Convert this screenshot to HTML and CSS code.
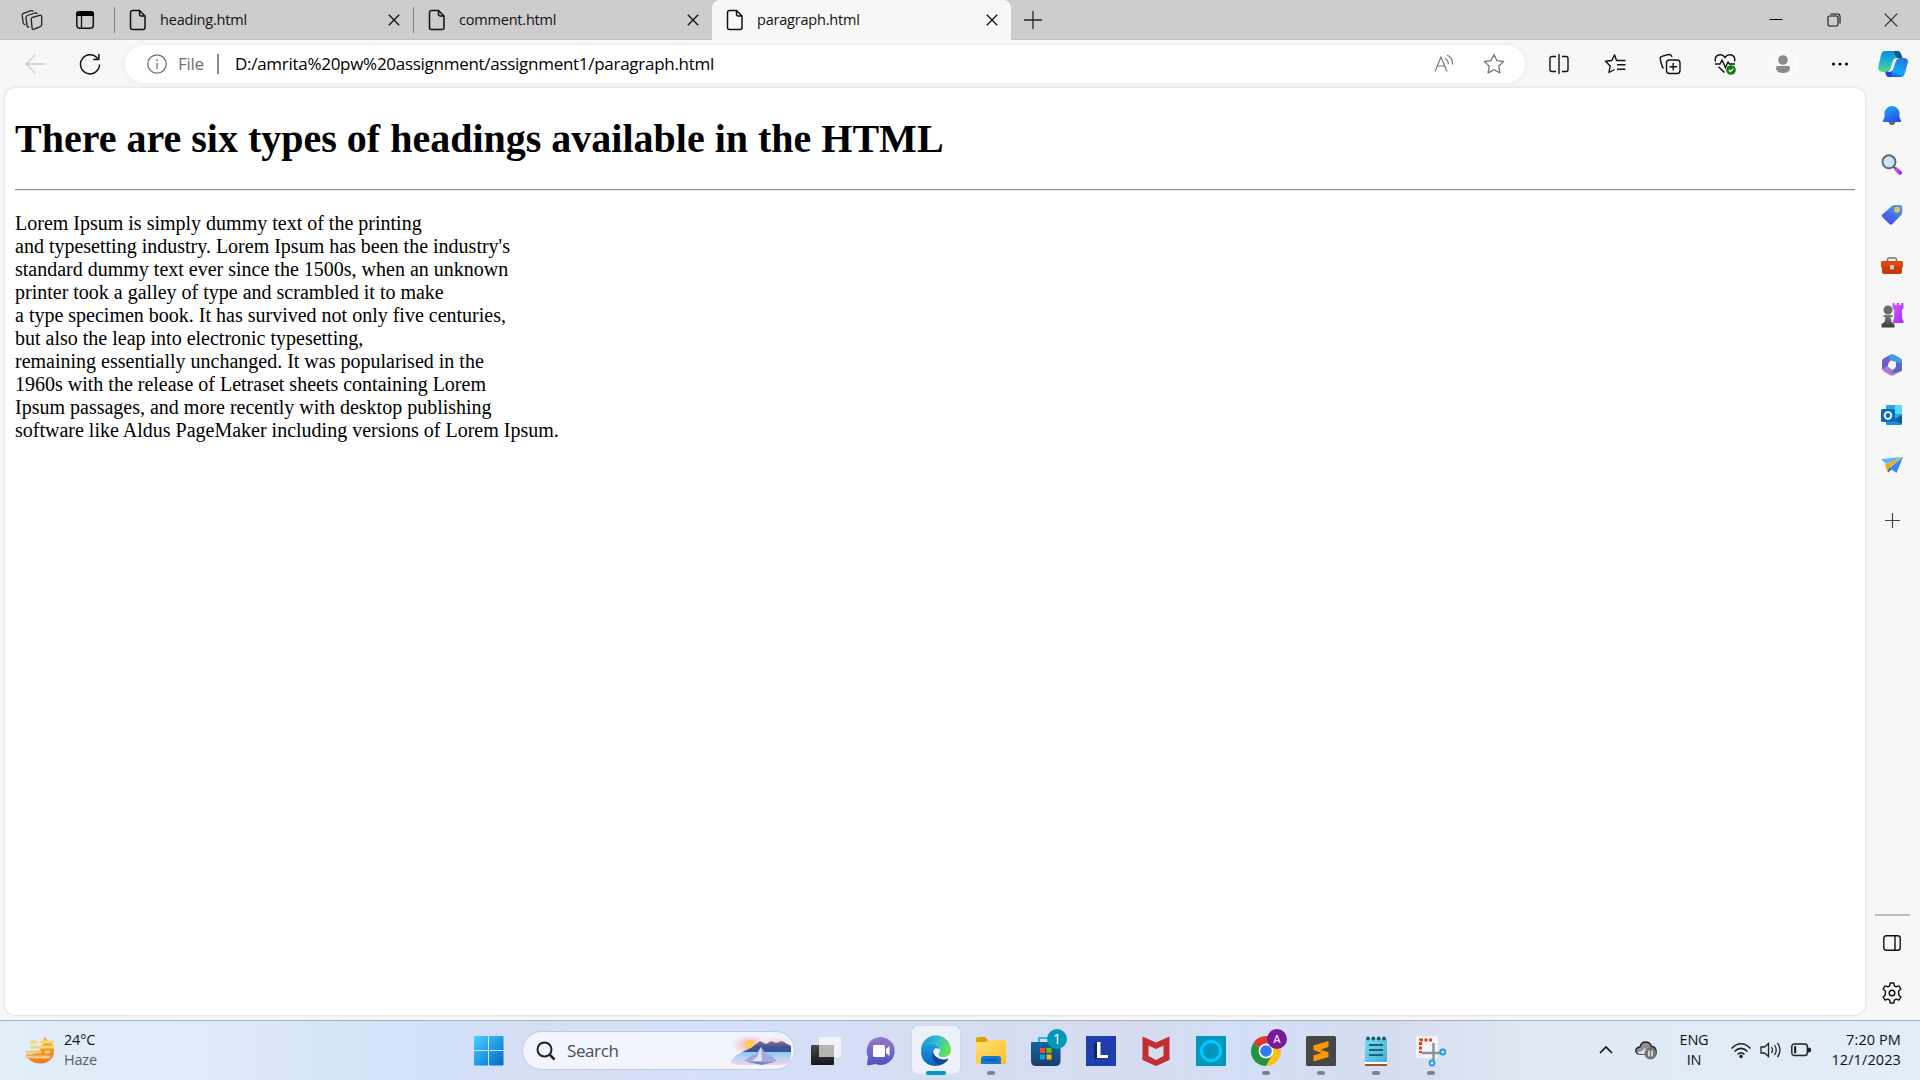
FILE: index.html
```html
<!DOCTYPE html>
<html lang="en">
<head>
<meta charset="utf-8">
<title>paragraph.html</title>
<link rel="stylesheet" href="styles.css">
</head>
<body>
<svg class="defs" width="0" height="0" aria-hidden="true">
  <defs>
    <symbol id="file" viewBox="0 0 18 22"><path d="M3.5 1.5h7l5.5 5.5v11.500a2 2 0 0 1-2 2H3.500a2 2 0 0 1-2-2v-15a2 2 0 0 1 2-2zM10.500 1.500v4a1.500 1.500 0 0 0 1.500 1.500h4" fill="none" stroke="#111" stroke-width="1.500"/></symbol>
    <symbol id="x" viewBox="0 0 12 12"><path d="M.8.8l10.400 10.400M11.200.8L.8 11.200" stroke="#111" stroke-width="1.300"/></symbol>
    <linearGradient id="gBlue" x1="0" y1="0" x2="1" y2="1"><stop offset="0" stop-color="#48cfff"/><stop offset="1" stop-color="#0069cc"/></linearGradient>
    <linearGradient id="gBell" x1="0" y1="0" x2=".6" y2="1"><stop offset="0" stop-color="#1db0ec"/><stop offset="1" stop-color="#2456e8"/></linearGradient>
    <linearGradient id="gTag" x1=".8" y1="0" x2=".3" y2="1"><stop offset="0" stop-color="#4d9bf5"/><stop offset="1" stop-color="#3f4ae8"/></linearGradient>
    <linearGradient id="gPurple" x1="0" y1="0" x2="0" y2="1"><stop offset="0" stop-color="#9b78c8"/><stop offset="1" stop-color="#4c54c4"/></linearGradient>
    <linearGradient id="gCop1" x1=".3" y1="0" x2=".3" y2="1"><stop offset="0" stop-color="#128bd8"/><stop offset=".5" stop-color="#18b4d0"/><stop offset="1" stop-color="#5bdc85"/></linearGradient>
    <linearGradient id="gCop2" x1=".7" y1="0" x2=".3" y2="1"><stop offset="0" stop-color="#2677dd"/><stop offset=".7" stop-color="#15a9f8"/><stop offset="1" stop-color="#1e4be0"/></linearGradient>
    <linearGradient id="gMagenta" x1="0" y1="0" x2="1" y2="1"><stop offset="0" stop-color="#d05cff"/><stop offset="1" stop-color="#a22cf0"/></linearGradient>
    <linearGradient id="gFolder" x1="0" y1="0" x2="1" y2="1"><stop offset="0" stop-color="#ffe07a"/><stop offset="1" stop-color="#ffbe1f"/></linearGradient>
    <linearGradient id="gEdge1" x1="0" y1=".2" x2="1" y2=".5"><stop offset="0" stop-color="#1593d6"/><stop offset=".5" stop-color="#2cc0cf"/><stop offset="1" stop-color="#6ae649"/></linearGradient>
    <linearGradient id="gEdge2" x1="0" y1="0" x2="0" y2="1"><stop offset="0" stop-color="#1ba3e3"/><stop offset="1" stop-color="#0a60c0"/></linearGradient>
    <linearGradient id="gStore" x1="0" y1="0" x2="0" y2="1"><stop offset="0" stop-color="#0c67a6"/><stop offset="1" stop-color="#1d3c69"/></linearGradient>
    <linearGradient id="gPad" x1="0" y1="0" x2="1" y2="1"><stop offset="0" stop-color="#7bdcf3"/><stop offset="1" stop-color="#46acd2"/></linearGradient>
    <linearGradient id="gSun" x1="0" y1="0" x2="0" y2="1"><stop offset="0" stop-color="#f4b52c"/><stop offset="1" stop-color="#ef7620"/></linearGradient>
    <linearGradient id="gDark" x1="0" y1="0" x2="0" y2="1"><stop offset="0" stop-color="#4a4a4a"/><stop offset="1" stop-color="#171717"/></linearGradient>
    <linearGradient id="gChess" x1="0" y1="0" x2="0" y2="1"><stop offset="0" stop-color="#7c7c7c"/><stop offset="1" stop-color="#3a3a3a"/></linearGradient>
    <linearGradient id="gLake" x1="0" y1="0" x2="0" y2="1"><stop offset="0" stop-color="#8fc6ef"/><stop offset=".5" stop-color="#bdd5f5"/><stop offset="1" stop-color="#f3d3ec"/></linearGradient>
    <linearGradient id="gHill" x1="0" y1="0" x2="0" y2="1"><stop offset="0" stop-color="#8d7295"/><stop offset=".6" stop-color="#3b5290"/><stop offset="1" stop-color="#31599f"/></linearGradient>
    <radialGradient id="gGlow"><stop offset="0" stop-color="#ff9f9a"/><stop offset="1" stop-color="#ffb9c8" stop-opacity="0"/></radialGradient>
  </defs>
</svg>

<div class="screen">
  <header class="tabstrip">
    <div class="strip-tools">
      <svg width="22" height="22" viewBox="0 0 22 22" fill="none" stroke="#222" stroke-width="1.300"><path d="M11.500 8.300l7.200-2q2-.4 2 1.300v8q0 1.500-1.300 2l-6.300 2.600q-2 .6-2-1.300l-.9-8.500q0-1.600 1.300-2.100zM8.300 18q-2 .3-2.300-1.300L5 8.500Q5 7 6.400 6.500L14 4q1.800-.5 2.300 1M4.300 15.500q-1.800.2-2.100-1.500L1.200 6.500Q1 5 2.500 4.400L10 1.700q1.600-.5 2.300.8"/></svg>
      <svg width="20" height="20" viewBox="0 0 20 20"><rect x="1.800" y="1.800" width="16.500" height="16.500" rx="3" fill="none" stroke="#111" stroke-width="1.500"/><path d="M1 6V4a3 3 0 0 1 3-3h12a3 3 0 0 1 3 3v2z"/><path d="M6.500 6v12" stroke="#111" stroke-width="1.300"/></svg>
    </div>
    <div class="tab"><svg class="doc"><use href="#file"/></svg><span class="tab-name">heading.html</span><svg class="close"><use href="#x"/></svg></div>
    <div class="tab"><svg class="doc"><use href="#file"/></svg><span class="tab-name">comment.html</span><svg class="close"><use href="#x"/></svg></div>
    <div class="tab active"><svg class="doc"><use href="#file"/></svg><span class="tab-name">paragraph.html</span><svg class="close"><use href="#x"/></svg></div>
    <div class="newtab"><svg width="18" height="18" viewBox="0 0 18 18"><path d="M9 0v18M0 9h18" stroke="#222" stroke-width="1.300"/></svg></div>
    <div class="window-controls">
      <svg width="14" height="14" viewBox="0 0 14 14"><path d="M.5 6.500h13" stroke="#000"/></svg>
      <svg width="14" height="14" viewBox="0 0 14 14" fill="none" stroke="#111" stroke-width="1.100"><rect x="1" y="3" width="10" height="10" rx="1.500"/><path d="M3.500 1h7q2.500 0 2.500 2.500v7"/></svg>
      <svg width="14" height="14" viewBox="0 0 14 14"><path d="M.7.700l12.600 12.600M13.300.700L.7 13.300" stroke="#222" stroke-width="1.100"/></svg>
    </div>
  </header>

  <nav class="toolbar">
    <svg class="back" width="20" height="20" viewBox="0 0 20 20" fill="none" stroke="#ccc" stroke-width="1.300"><path d="M10 1L1 10l9 9M1 10h19"/></svg>
    <svg class="reload" width="22" height="22" viewBox="0 0 22 22" fill="none" stroke="#111" stroke-width="1.500"><path d="M20.500 11.500A9.500 9.500 0 1 1 18.500 5.500M19.800 1v5.500h-5.600"/></svg>
    <div class="address">
      <svg width="20" height="20" viewBox="0 0 20 20" fill="none" stroke="#707070" stroke-width="1.300"><circle cx="10" cy="10" r="9.200"/><path d="M10 9v6"/><circle cx="10" cy="6" r=".6" fill="#707070" stroke-width=".8"/></svg>
      <span class="scheme">File</span>
      <i class="bar"></i>
      <span class="url">D:/amrita%20pw%20assignment/assignment1/paragraph.html</span>
      <svg class="read" width="20" height="20" viewBox="0 0 20 20" fill="none" stroke="#777" stroke-width="1.200"><path d="M1 17.500L7 3l6 14.500M3.300 12h7.400M11 4.200q3.500 1.800 3.300 6M13 1q6 2.800 5.500 9.500"/></svg>
      <svg width="22" height="22" viewBox="0 0 22 22" fill="none" stroke="#777" stroke-width="1.300" stroke-linejoin="round"><path d="M11 1.500l2.900 6.100 6.600.9-4.800 4.700 1.200 6.700L11 16.700l-5.900 3.200 1.200-6.700L1.500 8.500l6.600-.9z"/></svg>
    </div>
    <div class="actions">
      <div><svg width="20" height="20" viewBox="0 0 20 20" fill="none" stroke="#111" stroke-width="1.400"><path d="M10 0v20M7 2.500H3a2 2 0 0 0-2 2v11a2 2 0 0 0 2 2h4M13 2.500h4a2 2 0 0 1 2 2v11a2 2 0 0 1-2 2h-4"/></svg></div>
      <div><svg width="22" height="22" viewBox="0 0 22 22" fill="none" stroke="#111" stroke-width="1.400" stroke-linejoin="round"><path d="M14 7.500h-1.500L10.500 1.800 7.800 7.500 1.500 8.300l4.600 4.700-1.100 6.500 5.500-3M14 7.500h7.500M13 11.800h8.500M13 16.200h8.500"/></svg></div>
      <div><svg width="22" height="22" viewBox="0 0 22 22" fill="none" stroke="#111" stroke-width="1.400"><rect x="7.500" y="7" width="13.500" height="13.500" rx="3"/><path d="M14.200 10v7.500M10.500 13.800H18M4.800 15.200l-.6-.3Q3.300 14.500 3 13L1.200 6.200Q.8 4 2.800 3.300L9.500 1.500Q12 1 13 3.800"/></svg></div>
      <div><svg width="22" height="22" viewBox="0 0 22 22" fill="none" stroke="#111" stroke-width="1.400"><path d="M1.400 8.500C0 1 8 0 11 4.500 14 0 22 1 20.600 8.500M1 11h5l2-4 3.500 7.500L14 9l1.500 2H21M4.500 13.800l6 5.700"/><circle cx="17" cy="17" r="4.800" fill="#107c10" stroke="none"/><path d="M14.800 17l1.600 1.600 3-3" stroke="#fff" stroke-width="1.200"/></svg></div>
      <div><svg width="28" height="28" viewBox="0 0 28 28"><circle cx="14" cy="14" r="13.500" fill="#f8f8f8" stroke="#fff"/><circle cx="14" cy="10" r="4.800" fill="#8b8b8b"/><path d="M7 17.500q0-1.500 1.500-1.500h11q1.500 0 1.500 1.500 0 5.500-7 5.500t-7-5.500z" fill="#8b8b8b"/></svg></div>
      <div><svg width="18" height="6" viewBox="0 0 18 6"><circle cx="2.500" cy="3" r="1.600"/><circle cx="9" cy="3" r="1.600"/><circle cx="15.500" cy="3" r="1.600"/></svg></div>
      <div><svg width="30" height="28" viewBox="0 0 30 28"><path d="M7 1h12q3 0 4 3l1 4h-5q-3 0-4 3l-2.500 8q-1 3-4 3H4Q0 21 .2 17.500L3 5q1-4 4-4z" fill="url(#gCop1)"/><path d="M16 1h3q3 0 4 3l1.500 4H20q-2 0-3-3z" fill="#10557f"/><path d="M23 8h3q4 0 4 4l-3 11q-1 4-4.500 4H11q-3 0-4-5h2.500q2.500 0 3.500-3l2.500-7.500q1-3.500 4-3.500z" fill="url(#gCop2)"/><path d="M8 21.500h2.500q3 0 4-3l-2 8.500H11q-2.500 0-3-5.500z" fill="#2044cf"/><path d="M18.800 8q-3 .3-3.800 3l-2.500 8q-.7 2.500-3 3 4.500.3 5.700-3l2.500-7.500q.8-2.800 3.300-3.500z" fill="#f7f7f7"/></svg></div>
    </div>
  </nav>

  <div class="middle">
    <main class="page">
      <h1>There are six types of headings available in the HTML</h1>
      <hr>
      <p>Lorem Ipsum is simply dummy text of the printing<br>and typesetting industry. Lorem Ipsum has been the industry's<br>standard dummy text ever since the 1500s, when an unknown<br>printer took a galley of type and scrambled it to make<br>a type specimen book. It has survived not only five centuries,<br>but also the leap into electronic typesetting,<br>remaining essentially unchanged. It was popularised in the<br>1960s with the release of Letraset sheets containing Lorem<br>Ipsum passages, and more recently with desktop publishing<br>software like Aldus PageMaker including versions of Lorem Ipsum.</p>
    </main>
    <aside class="sidebar">
      <div><svg width="22" height="22" viewBox="0 0 22 22"><path d="M7.500 17.500h7q-.5 3.500-3.500 3.500t-3.500-3.500z" fill="#666"/><path d="M3.500 9.500a7.500 7.500 0 0 1 15 0v4l1.700 3.300q.3 1.200-1 1.200H2.800q-1.300 0-1-1.200l1.700-3.300z" fill="url(#gBell)"/></svg></div>
      <div><svg width="22" height="22" viewBox="0 0 22 22"><path d="M15 15l4 3.800" stroke="url(#gMagenta)" stroke-width="4" stroke-linecap="round"/><path d="M12 12l3 3" stroke="#666" stroke-width="2"/><circle cx="8" cy="7.800" r="6.500" fill="#c8e6fa" stroke="#696969" stroke-width="2"/></svg></div>
      <div><svg width="22" height="22" viewBox="0 0 22 22"><path d="M11.500 1.500q.8-.6 2-.6H19q2.200 0 2.200 2.200v5.500q0 1.300-.8 2.200l-9 9.300q-1.500 1.300-3 0L1.300 13q-1.200-1.500.2-2.800z" fill="url(#gTag)"/><circle cx="16" cy="5.800" r="2.200" fill="#a9cbc0" stroke="#f5c915" stroke-width="1.500"/></svg></div>
      <div><svg width="24" height="20" viewBox="0 0 24 20"><path d="M7.500 7V4.500Q7.500 3 9 3h6q1.500 0 1.500 1.500V7" fill="none" stroke="#777" stroke-width="1.500"/><rect x="1" y="6" width="22" height="6.500" rx="1.200" fill="#dc4a13"/><path d="M2 11.500h20V17q0 2-2 2H4q-2 0-2-2z" fill="#c83a0c"/><rect x="10" y="10" width="4" height="4.500" rx="1" fill="#c7c7c7"/></svg></div>
      <div><svg width="24" height="26" viewBox="0 0 24 26"><path d="M12.500 1h2.200v2h2V1h2.600v2h2V1h2.200v5l-1.500 2v8l1.500 3v2H13v-2l1.200-3V8l-1.700-2z" fill="url(#gMagenta)"/><circle cx="8" cy="8" r="4.500" fill="#6c6c6c"/><path d="M3.500 13h9v2h-2l1 5 3 2v3.500h-13V22l3-2 1-5h-2z" fill="url(#gChess)"/></svg></div>
      <div><svg width="22" height="24" viewBox="0 0 22 24"><path d="M8 2.500Q11 .500 14 2.300l5.500 3.200Q21 6.500 21 8v2l-6.500-2.500Q11 5.500 9 8L7 13l-5.500 4Q1 16.500 1 15V8q0-1.500 1.500-2.500z" fill="#6b5fd0"/><path d="M8 2.500Q11 .500 14 2.300l5.500 3.200Q21 6.500 21 8v8l-6-2.500V9L8.500 7z" fill="#439bda"/><path d="M1.500 17L7 13l4 3.500q3 0 4-3l6-3.500v6q0 1.500-1.500 2.500L13 22q-2 1-4 0l-6-3.500z" fill="#aa78cf"/><path d="M15 13.500V9l6 1v6q0 1.500-1.500 2.500L11 20z" fill="#5269c8"/><circle cx="11" cy="12" r="3.800" fill="#f7f7f7"/></svg></div>
      <div><svg width="22" height="22" viewBox="0 0 22 22"><rect x="5" y="1" width="16" height="18" rx="1" fill="#29a5e8"/><path d="M14 1h6q1 0 1 1v8h-7z" fill="#58d9fb"/><path d="M5 11l8 5 8-5v9q0 1-1 1H6q-1 0-1-1z" fill="#1490dd"/><path d="M12 16l9-5v9z" fill="#0b5f9d"/><rect y="5" width="14" height="13" rx="1.500" fill="#0f6cbd"/><circle cx="7" cy="11.500" r="3.300" fill="none" stroke="#fff" stroke-width="1.800"/></svg></div>
      <div><svg width="24" height="18" viewBox="0 0 24 18"><path d="M7 10l1 6.500 3.500-3.500" fill="#174a99"/><path d="M23 1L5 8.500l2.500 8L10 11z" fill="#f6a719"/><path d="M1 3L23 1 6 8z" fill="#55bdf3"/><path d="M23 1l-6.500 16-7-5z" fill="#348af2"/></svg></div>
      <div class="add"><svg width="15" height="15" viewBox="0 0 15 15"><path d="M7.500 0v15M0 7.500h15" stroke="#444" stroke-width="1.200"/></svg></div>
      <hr>
      <div><svg width="18" height="16" viewBox="0 0 18 16" fill="none" stroke="#111" stroke-width="1.400"><rect x=".8" y=".8" width="16.400" height="14.400" rx="2.500"/><path d="M12 1v14"/></svg></div>
      <div><svg width="22" height="22" viewBox="0 0 22 22" fill="none" stroke="#111" stroke-width="1.400" stroke-linejoin="round"><path d="M9.200 1h3.600l.6 2.900 1.700 1 2.800-1 2 3.200-2.200 2v3.800l2.200 2-2 3.200-2.800-1-1.700 1-.6 2.900H9.200l-.6-2.900-1.700-1-2.800 1-2-3.200 2.200-2V9.100l-2.200-2 2-3.200 2.800 1 1.700-1z"/><circle cx="11" cy="11" r="2.800"/></svg></div>
    </aside>
  </div>

  <footer class="taskbar">
    <div class="weather">
      <svg width="30" height="28" viewBox="0 0 30 28"><path d="M19 0q1 3 4.500 4.500 5.500 3 5.500 9.500 0 13-14 13.500Q4 27 1 18q8 2 13-3 5-6 5-15z" fill="url(#gSun)"/><path d="M6.500 6h4.500M16 6h12M6.500 11h22" stroke="#f8d775" stroke-width="3" stroke-linecap="round"/><path d="M2 16h13M21 16h3M2 21h22" stroke="#eecb82" stroke-width="3" stroke-linecap="round"/></svg>
      <div class="weather-text"><span>24°C</span><span class="muted">Haze</span></div>
    </div>
    <div class="dock">
      <div class="start"><svg width="30" height="30" viewBox="0 0 30 30"><path d="M1 0h13v14H0V1q0-1 1-1zM15 0h13.500Q29.500 0 29.500 1v13H15zM0 15h14v14.500H1q-1 0-1-1zM15 15h14.500v13.500q0 1-1 1H15z" fill="url(#gBlue)"/></svg></div>
      <div class="search">
        <svg width="20" height="20" viewBox="0 0 20 20" fill="none" stroke="#222" stroke-width="2"><circle cx="8.500" cy="8.500" r="7"/><path d="M13.500 13.500l5 5" stroke-width="2.500"/></svg>
        <span>Search</span>
        <svg class="scene" width="62" height="32" viewBox="0 0 62 32"><ellipse cx="20" cy="10" rx="19" ry="11" fill="url(#gGlow)"/><ellipse cx="46" cy="8" rx="15" ry="8" fill="url(#gGlow)" opacity=".5"/><path d="M12 17h49v6q-1 7-9 7H8q-8-1-7-5 5-5 11-8z" fill="url(#gLake)"/><circle cx="20" cy="10" r="5" fill="#ffcc4d"/><path d="M12 17l9-4 9-7 6 3 5-3 5 2 6-2 9 5v6z" fill="url(#gHill)"/><path d="M14 26l8-6 4-1 5-7 5 7 5 1 6 6q-16 5-33 0z" fill="#a9a6de"/><path d="M31 12l-4 10-5 4h10z" fill="#e3e3fa"/><path d="M18 27h26l-12 3z" fill="#7482c7"/></svg>
      </div>
      <div class="app first"><svg width="30" height="28" viewBox="0 0 30 28"><rect y="8" width="23" height="20" rx="1" fill="url(#gDark)"/><rect x="8" width="22" height="20" rx="1" fill="#f4f4f4" opacity=".92"/><path d="M8 8h15v12H8z" fill="#b4b4b4"/></svg></div>
      <div class="app"><svg width="30" height="30" viewBox="0 0 30 30"><path d="M15 1a14 14 0 1 1-5.500 27Q5 29.500 1 29l1-8A14 14 0 0 1 15 1z" fill="url(#gPurple)"/><rect x="7" y="9" width="12" height="12" rx="1.500" fill="#fff"/><path d="M20 13l3.500-3v10L20 17z" fill="#fff"/></svg></div>
      <div class="app current"><svg width="30" height="30" viewBox="0 0 30 30"><path d="M0 15A15 15 0 0 1 30 14q0 7-8 7-5 0-4.500-3 2-1.500 1.500-4Q17 7 9 7 3 8 0 15z" fill="url(#gEdge1)"/><path d="M0 16Q1 7.500 9.500 7 16 7 19 13q-7-3-7 5 1 8 10 10-4 2-8 2Q1 29 0 16z" fill="url(#gEdge2)"/><path d="M12 16q-3 7 4 12 5 2 9-2 2.500-2 2-3.500-4 2-9 0-4.500-2-6-6.500z" fill="#114a94"/></svg><i class="mark on"></i></div>
      <div class="app"><svg width="30" height="27" viewBox="0 0 30 27"><path d="M0 2q0-2 2-2h7l3 3h18v12H0z" fill="#dda005"/><path d="M0 5h10l2-2h18v24H0z" fill="url(#gFolder)"/><path d="M5 27v-5q0-3 3-3h14q3 0 3 3v5z" fill="#1478d0"/><path d="M9 23h12" stroke="#084f97" stroke-width="1.500"/></svg><i class="mark"></i></div>
      <div class="app"><svg width="30" height="30" viewBox="0 0 30 30"><path d="M8 7V2h13" fill="none" stroke="#28b7f2" stroke-width="2"/><path d="M0 6h29.500v19q0 5-5 5H5q-5 0-5-5z" fill="url(#gStore)"/><path d="M9 12h5v5H9z" fill="#f25022"/><path d="M15.500 12h5v5h-5z" fill="#7fba00"/><path d="M9 18.500h5v5H9z" fill="#00a4ef"/><path d="M15.500 18.500h5v5h-5z" fill="#ffb900"/></svg><b class="badge">1</b></div>
      <div class="app"><svg width="30" height="30" viewBox="0 0 30 30"><path d="M0 0h30v30H0z" fill="#1e3ead"/><path d="M11 6l-3 2v15l14-1v-3H11z" fill="#06295b"/><path d="M11 6h3.500v13H22v3H11z" fill="#fff"/></svg></div>
      <div class="app"><svg width="28" height="30" viewBox="0 0 28 30"><path d="M.5.500l13.500 6 13.500-6V24L14 30 .5 24zM6.500 9.500v10.500l7.500 4 7.500-4V9.500L14 13z" fill="#c52e31" fill-rule="evenodd"/></svg></div>
      <div class="app"><svg width="30" height="30" viewBox="0 0 30 30"><path d="M0 0h30v30H0z" fill="#0497bd"/><circle cx="15" cy="15" r="9.500" fill="none" stroke="#00caff" stroke-width="3"/><path d="M10 23h6l-1 3.500q-4-1-5-3.500z" fill="#00caff"/></svg></div>
      <div class="app"><svg width="30" height="30" viewBox="0 0 30 30"><path d="M15 15L2 7.500A15 15 0 0 1 28 7.500z" fill="#df3b30"/><path d="M15 15L2 7.500A15 15 0 0 0 15 30l6.500-11z" fill="#25943f"/><path d="M15 15V7.500h13A15 15 0 0 1 15 30l6.500-11.500z" fill="#fbc116"/><circle cx="15" cy="15" r="7.500" fill="#fff"/><circle cx="15" cy="15" r="5.800" fill="#337bef"/></svg><b class="badge profile">A</b><i class="mark"></i></div>
      <div class="app"><svg width="30" height="30" viewBox="0 0 30 30"><rect width="30" height="30" rx="1.500" fill="#464646"/><path d="M22.500 5v6l-8 2.700 8 2.600V21L7.500 25.500v-6l8-2.500-8-3V9.500z" fill="#ff9800"/></svg><i class="mark"></i></div>
      <div class="app"><svg width="24" height="30" viewBox="0 0 24 30"><path d="M1 26h22v4H1z" fill="#a35114"/><path d="M1 26h22v2H1z" fill="#fff"/><path d="M1 3h22v23H1z" fill="url(#gPad)"/><g fill="#155a73"><circle cx="4" cy="2.500" r="1.900"/><circle cx="9.300" cy="2.500" r="1.900"/><circle cx="14.700" cy="2.500" r="1.900"/><circle cx="20" cy="2.500" r="1.900"/></g><path d="M5 9h14M5 14h14M5 19h14" stroke="#13677e" stroke-width="2"/></svg><i class="mark"></i></div>
      <div class="app"><svg width="30" height="30" viewBox="0 0 30 30"><rect width="22" height="22" rx="2" fill="#f4f3f5"/><path d="M16 4H4.500v13" fill="none" stroke="#dc4018" stroke-width="3" stroke-dasharray="3 1.500"/><path d="M6 17h18M17.500 7v17" stroke="#8b949c" stroke-width="2.500"/><circle cx="26.800" cy="16" r="2.500" fill="none" stroke="#229be8" stroke-width="1.800"/><circle cx="16" cy="27" r="2.500" fill="none" stroke="#229be8" stroke-width="1.800"/></svg><i class="mark"></i></div>
    </div>
    <div class="tray">
      <svg class="caret" width="14" height="9" viewBox="0 0 14 9"><path d="M1 8l6-6 6 6" fill="none" stroke="#111" stroke-width="1.600"/></svg>
      <svg class="cloud" width="22" height="20" viewBox="0 0 22 20"><path d="M4 14Q0 13 1 9.500 2 7 5 7q1-5 5.500-5t6 4.500q4 0 4.500 4v3.500z" fill="#8f8f8f" stroke="#222" stroke-width="1.400"/><path d="M2 12q5 0 8-4l8 6H4z" fill="#dedede"/><circle cx="15.500" cy="13.500" r="6" fill="#747474"/><path d="M14 10.500v6M17 10.500v6" stroke="#fff" stroke-width="1.300"/></svg>
      <div class="language"><span>ENG</span><span>IN</span></div>
      <svg class="wifi" width="22" height="18" viewBox="0 0 22 18" fill="none" stroke="#222" stroke-width="1.500"><path d="M1.500 7.500Q11-2 20.500 7.500M4.500 10.500q6.500-6.300 13 0M7.500 13.500q3.500-3.300 7 0"/><circle cx="11" cy="15.500" r="1" fill="#222"/></svg>
      <svg class="sound" width="22" height="18" viewBox="0 0 22 18" fill="none" stroke="#222" stroke-width="1.300"><path d="M1 6h3.500l4-3.500v13L4.500 12H1zM11.500 6q2 3 0 6M14.500 4q3.500 5 0 10M17.500 1.800q5 7.200 0 14.400"/></svg>
      <svg class="battery" width="20" height="14" viewBox="0 0 20 14"><rect x=".8" y="1" width="15.500" height="11.500" rx="2.500" fill="none" stroke="#222" stroke-width="1.400"/><path d="M3 3.200h2.200v7H3zM17 4.500h1l2 1v3l-2 1h-1z" fill="#222"/></svg>
      <div class="clock"><span>7:20 PM</span><span>12/1/2023</span></div>
    </div>
  </footer>
</div>
</body>
</html>
```
FILE: styles.css
```css
* { box-sizing: border-box; }
body { margin: 0; overflow: hidden; font-family: "Open Sans", "Noto Sans", sans-serif; color: #111; }
svg { display: block; flex: none; overflow: visible; }
.defs { position: absolute; }
.screen { width: 1920px; height: 1080px; display: flex; flex-direction: column; background: #f7f7f7; }

/* Tab strip */
.tabstrip { height: 40px; display: flex; background: #cdcdcd; box-shadow: inset 0 -1px #bfbfbf; }
.strip-tools { width: 114px; display: flex; align-items: center; gap: 32px; padding-left: 21px; }
.tab { width: 299px; display: flex; align-items: center; padding: 0 13px 0 14px; border-left: 1px solid #858585; border-image: linear-gradient(transparent 8px, #858585 8px, #858585 32px, transparent 32px) 1; }
.doc { width: 18px; height: 22px; }
.close { width: 12px; height: 12px; }
.tab-name { flex: 1; margin-left: 13px; font-size: 14.500px; line-height: 20px; letter-spacing: -0.200px; }
.tab.active { background: #f7f7f7; border: 0; padding-left: 14px; border-radius: 8px 8px 0 0; }
.newtab { width: 44px; display: grid; place-items: center; }
.window-controls { margin-left: auto; display: flex; align-items: center; gap: 43.500px; padding-right: 22px; }

/* Address row */
.toolbar { height: 48px; display: flex; align-items: center; }
.back { margin: 0 34px 0 25px; }
.reload { margin-right: 24px; }
.address { width: 1400px; height: 38px; border-radius: 19px; display: flex; align-items: center; padding: 0 20px 0 22px; background: #fff; box-shadow: 0 0 4px #e7e7e7; font-size: 17px; }
.scheme { width: 40px; margin-left: 11px; padding-bottom: 2px; color: #707070; letter-spacing: -0.300px; }
.bar { width: 2px; height: 20px; margin-left: -1px; background: #8b8b8b; }
.url { margin-left: 16px; padding-bottom: 2px; white-space: nowrap; letter-spacing: -0.280px; color: #000; }
.read { margin: 0 29px 0 auto; }
.actions { display: grid; grid-template-columns: 56px 56px 54px 56px 60px 54px 52px; margin-left: 6px; align-items: center; justify-items: center; }

/* Document and sidebar */
.middle { height: 932px; display: flex; padding-left: 5px; }
.page { width: 1860px; height: 927px; padding: 0 10px; border-radius: 10px; background: #fff; box-shadow: 0 0 3px #cfcfcf; overflow: hidden; font-family: "Liberation Serif", serif; color: #000; }
.page h1 { margin: 28px 0 27px; font-size: 40px; line-height: 46px; }
.page hr { height: 2px; margin: 0; border: 0; border-top: 1px solid #8f8f8f; border-bottom: 1px solid #e9e9e9; }
.page p { margin: 21px 0 0; font-size: 20px; line-height: 23px; }
.sidebar { width: 54px; display: flex; flex-direction: column; align-items: center; padding-top: 2px; }
.sidebar > div { height: 50px; flex: none; display: grid; place-items: center; }
.sidebar > .add { height: 60px; }
.sidebar hr { width: 35px; height: 2px; margin: auto 0 2px; border: 0; background: #bdbdbd; }
.sidebar > div:last-child { margin-bottom: 2px; }

/* Taskbar */
.taskbar { height: 60px; display: flex; border-top: 1px solid #a9b0ba; background: linear-gradient(90deg, #e1edf7 0, #deebfa 190px, #d1e1f8 430px, #d6def5 540px, #d3e1f8 720px, #d5def6 860px, #d7dcf0 1130px, #d1dff6 1240px, #d7dcef 1400px, #e0e9f5 1540px, #e1edf8 100%); }
.weather { width: 462px; display: flex; align-items: center; gap: 9px; padding: 0 0 2px 25px; }
.weather-text, .language, .clock { display: flex; flex-direction: column; font-size: 14.500px; line-height: 20px; letter-spacing: -0.200px; }
.muted { color: #555e68; }
.dock { display: flex; align-items: center; }
.start { width: 60px; display: grid; place-items: center; padding-right: 6px; }
.search { width: 273px; height: 39px; display: flex; align-items: center; padding: 0 1px 0 13px; border: 1px solid #c0cbe0; border-radius: 20px; background: #f2f5fd; font-size: 17px; letter-spacing: -0.400px; color: #4b4e54; }
.search span { margin-left: 11px; }
.scene { margin-left: auto; margin-right: 1px; }
.app { width: 55px; height: 59px; flex: none; display: grid; place-items: center; position: relative; }
.app.first { margin-left: 3px; }
.current::before { content: ""; position: absolute; left: 4px; top: 5px; width: 48px; height: 48px; border-radius: 5px; background: #ecf0fb; box-shadow: 0 0 1px #aab; }
.current svg { position: relative; }
.mark { position: absolute; left: 24px; bottom: 5px; width: 8px; height: 4px; border-radius: 2px; background: #7f838d; }
.mark.on { left: 18px; width: 20px; background: #0498ba; }
.badge { position: absolute; left: 29px; top: 8px; width: 20px; height: 20px; border-radius: 50%; background: #0498b8; color: #fff; font-size: 14px; font-weight: 400; line-height: 20px; text-align: center; }
.badge.profile { background: #781b9b; color: #ead8f2; font-size: 11px; font-weight: 600; }
.tray { margin-left: auto; display: flex; align-items: center; padding: 0 19px 2px 0; }
.caret { margin-right: 22px; }
.cloud { margin-right: 20px; }
.language { width: 34px; align-items: center; margin-right: 19px; }
.wifi { margin-right: 8px; }
.sound { margin-right: 9px; }
.clock { width: 90px; align-items: flex-end; letter-spacing: 0.100px; }
```
